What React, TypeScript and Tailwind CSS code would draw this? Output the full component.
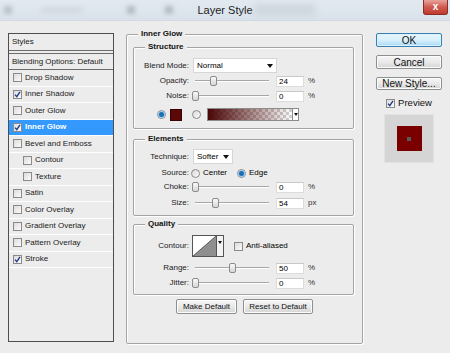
import React from "react";

function Check({ checked = false }: { checked?: boolean }) {
  return (
    <div className="w-[9px] h-[9px] shrink-0 border border-[#8a8a8a] bg-gradient-to-br from-[#dcdcdc] to-[#fbfbfb] flex items-center justify-center">
      {checked && (
        <svg width="7" height="7" viewBox="0 0 7 7">
          <path d="M1 3.6 L2.8 5.6 L6 0.8" fill="none" stroke="#1f3b8c" strokeWidth="1.4" />
        </svg>
      )}
    </div>
  );
}

function Radio({ on = false }: { on?: boolean }) {
  return (
    <div className="w-[9px] h-[9px] shrink-0 rounded-full border border-[#8a8a8a] bg-gradient-to-br from-[#d8d8d8] to-[#fdfdfd] flex items-center justify-center">
      {on && <div className="w-[5px] h-[5px] rounded-full bg-[#1b6fb8] shadow-[0_0_0_1px_#9cc8ec]" />}
    </div>
  );
}

function Slider({ value }: { value: number }) {
  return (
    <div className="relative w-[74px] h-[12px] flex items-center shrink-0">
      <div className="w-full h-[2px] border-t border-[#a6a6a6] border-b border-b-white" />
      <div
        className="absolute top-[1px] w-[7px] h-[10px] rounded-[2px] border border-[#8c8c8c] bg-gradient-to-b from-[#fafafa] to-[#d6d6d6]"
        style={{ left: `${(value / 100) * 74 - 3}px` }}
      />
    </div>
  );
}

function Num({ v }: { v: string }) {
  return (
    <div className="w-[28px] h-[11px] shrink-0 bg-white border border-[#dcdcdc] border-t-[#c8c8c8] text-[8px] leading-[9px] pl-[2px]">
      {v}
    </div>
  );
}

function Label({ children }: { children: React.ReactNode }) {
  return <div className="w-[55px] shrink-0 text-right text-[8px] text-[#222]">{children}</div>;
}

function SliderRow({ label, value, num, unit, className }: { label: string; value: number; num: string; unit: string; className: string }) {
  return (
    <div className={`flex items-center h-[12px] ${className}`}>
      <Label>{label}</Label>
      <div className="ml-[6px]">
        <Slider value={value} />
      </div>
      <div className="ml-[7px]">
        <Num v={num} />
      </div>
      <div className="ml-[4px] text-[8px] text-[#333]">{unit}</div>
    </div>
  );
}

function Group({ title, className, children }: { title: string; className: string; children: React.ReactNode }) {
  return (
    <div className={`relative border border-[#a4a4a4] rounded-[2px] shadow-[inset_1px_1px_0_#fff,1px_1px_0_#fff] ${className}`}>
      <div className="absolute -top-[6px] left-[11px] px-[3px] bg-[#ececec] font-bold text-[8px] leading-[10px] text-[#111]">
        {title}
      </div>
      {children}
    </div>
  );
}

function Arrow() {
  return (
    <svg width="6" height="4" viewBox="0 0 6 4">
      <path d="M0 0 H6 L3 4 Z" fill="#111" />
    </svg>
  );
}

function Btn({ children, className }: { children: React.ReactNode; className: string }) {
  return (
    <div
      className={`flex items-center justify-center rounded-[2px] border border-[#8e8f8f] bg-gradient-to-b from-[#f6f6f6] via-[#e9e9e9] to-[#d5d5d5] shadow-[inset_0_0_0_1px_#fcfcfc] text-[#111] ${className}`}
    >
      {children}
    </div>
  );
}

const items: { label: string; checked?: boolean; indent?: boolean; selected?: boolean }[] = [
  { label: "Drop Shadow" },
  { label: "Inner Shadow", checked: true },
  { label: "Outer Glow" },
  { label: "Inner Glow", checked: true, selected: true },
  { label: "Bevel and Emboss" },
  { label: "Contour", indent: true },
  { label: "Texture", indent: true },
  { label: "Satin" },
  { label: "Color Overlay" },
  { label: "Gradient Overlay" },
  { label: "Pattern Overlay" },
  { label: "Stroke", checked: true },
];

export default function App() {
  return (
    <div className="w-[450px] h-[353px] bg-[#ececec] flex flex-col overflow-hidden font-['Liberation_Sans',Arial,sans-serif]">
      {/* Title bar */}
      <div className="h-[21px] shrink-0 grid grid-cols-[1fr_auto_1fr] bg-gradient-to-b from-[#e2e9f0] to-[#d9e2eb] border-b border-[#d3dae1]">
        <div className="flex items-center pl-[4px]">
          <div className="w-[8px] h-[8px] bg-[#b9c1c9] blur-[2px]" />
          <div className="w-[40px] h-[6px] bg-[#d2d9e0] blur-[2px] ml-[30px]" />
          <div className="w-[8px] h-[8px] bg-[#b3bbc3] blur-[2px] ml-[45px]" />
          <div className="w-[8px] h-[8px] bg-[#b3bbc3] blur-[2px] ml-[30px]" />
        </div>
        <div className="flex items-center justify-center text-[11px] text-[#1c1c1c] px-[2px]">
          Layer Style
        </div>
        <div className="flex items-start justify-between pr-[2px]">
          <div className="w-[60px] h-[12px] mt-[4px] bg-[#cfd7df] blur-[3px]" />
          <div className="w-[25px] h-[15px] rounded-b-[3px] border border-t-0 border-[#8d2b24] bg-gradient-to-b from-[#e6a39c] via-[#cf5a50] to-[#c0392f] flex items-center justify-center text-white font-bold text-[10px] leading-none">
            x
          </div>
        </div>
      </div>

      {/* Body */}
      <div className="flex pt-[12px] pl-[8px]">
        {/* Left panel */}
        <div className="w-[106px] h-[309px] shrink-0 border border-[#4e4e4e] bg-[#ececec] flex flex-col text-[8px] text-[#1a1a1a]">
          <div className="h-[17px] shrink-0 flex items-center pl-[3px] border-b border-[#6b6b6b]">Styles</div>
          <div className="h-[17px] mt-[2px] shrink-0 flex items-center pl-[3px] border-t border-b border-[#6b6b6b]">
            Blending Options: Default
          </div>
          {items.map((it) => (
            <div
              key={it.label}
              className={`h-[16.5px] shrink-0 flex items-center border-b border-white ${it.indent ? "pl-[14px]" : "pl-[4px]"} ${
                it.selected ? "bg-[#3399ff] text-white font-bold" : ""
              }`}
            >
              <Check checked={it.checked} />
              <span className="ml-[3px]">{it.label}</span>
            </div>
          ))}
        </div>

        {/* Main group */}
        <div className="ml-[12px] mt-[1px]">
          <Group title="Inner Glow" className="w-[237px] h-[310px] pt-[12px] pl-[6px]">
            <Group title="Structure" className="w-[221px] h-[82px] pt-[10px]">
              <div className="flex items-center h-[15px]">
                <Label>Blend Mode:</Label>
                <div className="ml-[4px] w-[84px] h-[15px] bg-white border border-[#d6d6d6] flex items-center justify-between pl-[3px] pr-[3px] text-[8px]">
                  <span>Normal</span>
                  <Arrow />
                </div>
              </div>
              <SliderRow label="Opacity:" value={24} num="24" unit="%" className="mt-[2px]" />
              <SliderRow label="Noise:" value={0} num="0" unit="%" className="mt-[3px]" />
              <div className="flex items-center h-[13px] mt-[6px] pl-[23px]">
                <Radio on />
                <div className="ml-[4px] w-[12px] h-[12px] bg-[#5c0808] border border-[#3a0303]" />
                <div className="ml-[10px]">
                  <Radio />
                </div>
                <div className="ml-[6px] h-[13px] w-[92px] flex border border-[#8c8c8c] bg-white">
                  <div className="flex-1 bg-[repeating-conic-gradient(#d2d2d2_0_25%,#ffffff_0_50%)] bg-[length:6px_6px]">
                    <div className="w-full h-full bg-[linear-gradient(to_right,#4a0606,rgba(74,6,6,0))]" />
                  </div>
                  <div className="w-[6px] border-l border-[#8c8c8c] flex items-center justify-center">
                    <svg width="4" height="3" viewBox="0 0 4 3">
                      <path d="M0 0 H4 L2 3 Z" fill="#111" />
                    </svg>
                  </div>
                </div>
              </div>
            </Group>

            <Group title="Elements" className="w-[221px] h-[77px] mt-[10px] pt-[9px]">
              <div className="flex items-center h-[15px]">
                <Label>Technique:</Label>
                <div className="ml-[4px] w-[40px] h-[15px] bg-white border border-[#d6d6d6] flex items-center justify-between pl-[3px] pr-[3px] text-[8px]">
                  <span>Softer</span>
                  <Arrow />
                </div>
              </div>
              <div className="flex items-center h-[12px] mt-[3px] text-[8px]">
                <Label>Source:</Label>
                <div className="ml-[2px]">
                  <Radio />
                </div>
                <span className="ml-[3px]">Center</span>
                <div className="ml-[10px]">
                  <Radio on />
                </div>
                <span className="ml-[3px]">Edge</span>
              </div>
              <SliderRow label="Choke:" value={0} num="0" unit="%" className="mt-[2px]" />
              <SliderRow label="Size:" value={27} num="54" unit="px" className="mt-[4px]" />
            </Group>

            <Group title="Quality" className="w-[221px] h-[71px] mt-[8px] pt-[10px]">
              <div className="flex items-center h-[22px]">
                <Label>Contour:</Label>
                <div className="ml-[3px] w-[32px] h-[22px] border border-[#555] bg-white flex">
                  <svg width="23" height="20" viewBox="0 0 23 20" className="shrink-0">
                    <path d="M0 20 L23 0 L23 20 Z" fill="#8f8f8f" />
                    <path d="M0 20 L23 0" stroke="#444" strokeWidth="0.8" />
                  </svg>
                  <div className="flex-1 border-l border-[#555] bg-[#f3f3f3] flex items-start justify-center pt-[5px]">
                    <svg width="4" height="3" viewBox="0 0 4 3">
                      <path d="M0 0 H4 L2 3 Z" fill="#111" />
                    </svg>
                  </div>
                </div>
                <div className="ml-[10px]">
                  <Check />
                </div>
                <span className="ml-[3px] text-[8px]">Anti-aliased</span>
              </div>
              <SliderRow label="Range:" value={50} num="50" unit="%" className="mt-[5px]" />
              <SliderRow label="Jitter:" value={0} num="0" unit="%" className="mt-[3px]" />
            </Group>

            <div className="flex justify-center gap-[6px] mt-[4px] pr-[6px]">
              <Btn className="w-[61px] h-[15px] text-[8px]">Make Default</Btn>
              <Btn className="w-[70px] h-[15px] text-[8px]">Reset to Default</Btn>
            </div>
          </Group>
        </div>

        {/* Right column */}
        <div className="ml-[13px] w-[66px] flex flex-col items-center">
          <div className="w-[66px] h-[14px] rounded-[2px] border border-[#3c7fb1] bg-gradient-to-b from-[#eaf6fd] via-[#d9f0fc] to-[#a7d9f5] shadow-[inset_0_0_0_1px_#d6f1ff] flex items-center justify-center text-[10px] text-[#111]">
            OK
          </div>
          <Btn className="w-[66px] h-[14px] mt-[8px] text-[10px]">Cancel</Btn>
          <Btn className="w-[66px] h-[13px] mt-[8px] text-[10px]">New Style...</Btn>
          <div className="flex items-center mt-[8px] h-[10px]">
            <Check checked />
            <span className="ml-[3px] text-[9.5px] text-[#111]">Preview</span>
          </div>
          <div className="mt-[6px] w-[50px] h-[49px] bg-[#d5d5d5] border border-[#e2e2e2] flex items-center justify-center">
            <div className="w-[25px] h-[25px] bg-[#7a0000] flex items-center justify-center">
              <div className="w-[4px] h-[4px] bg-[#5a5a5a]" />
            </div>
          </div>
        </div>
      </div>
    </div>
  );
}
